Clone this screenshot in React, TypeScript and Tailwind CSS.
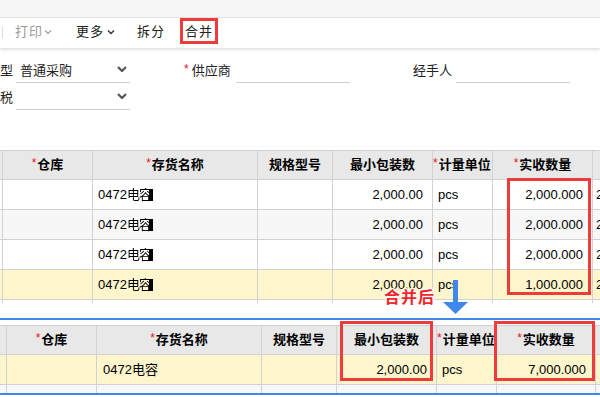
import React from "react";

const Star = () => (
  <span className="text-[#e8101f] text-[12px] font-normal relative -top-[2px] mr-px">*</span>
);

const Chevron = ({ className = "", bold = false }: { className?: string; bold?: boolean }) => (
  <svg width={bold ? 10 : 8} height="6" viewBox={bold ? "0 0 10 6" : "0 0 8 6"} className={className}>
    <polyline
      points={bold ? "1,1 5,5 9,1" : "1,1.5 4,4.5 7,1.5"}
      fill="none"
      stroke="currentColor"
      strokeWidth={bold ? 2.2 : 1.4}
    />
  </svg>
);

const Masked = () => (
  <span className="inline-flex items-center">
    0472
    <span className="blur-[0.7px] tracking-[-1px]">电容</span>
    <span className="inline-block w-[4px] h-[12px] bg-black -ml-[2px]" />
  </span>
);

type Row = { bg: string; name: React.ReactNode; pack: string; qty: string; tail: string };

function Grid({ first, last, rows, tailRow }: { first: string; last: string; rows: Row[]; tailRow: string }) {
  const widths = [first, "w-[90px]", "w-[165px]", "w-[75px]", "w-[100px]", "w-[60px]", last];
  const cell = "shrink-0 border-r border-[#d2d2d2] h-full flex items-center overflow-hidden whitespace-nowrap";
  return (
    <div className="border-t border-[#d2d2d2]">
      {/* header */}
      <div className="flex h-[29px] bg-[#e8e8e8] border-b border-[#d2d2d2] font-bold text-[13px] text-black">
        <div className={`${cell} ${widths[0]}`} />
        <div className={`${cell} ${widths[1]} justify-center`}><Star />仓库</div>
        <div className={`${cell} ${widths[2]} justify-center`}><Star />存货名称</div>
        <div className={`${cell} ${widths[3]} justify-center`}>规格型号</div>
        <div className={`${cell} ${widths[4]} justify-center`}>最小包装数</div>
        <div className={`${cell} ${widths[5]} justify-start`}><Star />计量单位</div>
        <div className={`${cell} ${widths[6]} justify-center`}><Star />实收数量</div>
        <div className="flex-1 h-full" />
      </div>
      {rows.map((r, i) => (
        <div key={i} className={`flex h-[30px] border-b border-[#d2d2d2] text-[13px] text-black ${r.bg}`}>
          <div className={`${cell} ${widths[0]}`} />
          <div className={`${cell} ${widths[1]}`} />
          <div className={`${cell} ${widths[2]} pl-[5px]`}>{r.name}</div>
          <div className={`${cell} ${widths[3]}`} />
          <div className={`${cell} ${widths[4]} justify-end pr-[9px]`}>{r.pack}</div>
          <div className={`${cell} ${widths[5]} pl-[5px]`}>pcs</div>
          <div className={`${cell} ${widths[6]} justify-end pr-[9px]`}>{r.qty}</div>
          <div className="flex-1 h-full flex items-center pl-[3px] overflow-hidden">{r.tail}</div>
        </div>
      ))}
      <div className={`flex ${tailRow}`}>
        {widths.map((w, i) => (
          <div key={i} className={`${cell} ${w}`} />
        ))}
      </div>
    </div>
  );
}

export default function App() {
  return (
    <div className="relative w-[600px] h-[397px] overflow-hidden bg-white text-[#222] font-['Liberation_Sans','Noto_Sans_CJK_SC',sans-serif]">
      {/* top band */}
      <div className="h-[18px] bg-[#f6f6f6] border-b border-[#e2e2e2]" />

      {/* toolbar */}
      <div className="h-[30px] flex items-start bg-white shadow-[0_2px_3px_rgba(0,0,0,0.12)] text-[13px] relative z-10">
        <div className="h-[26px] flex items-center pt-[2px]">
          <div className="ml-[2px] w-px h-[11px] bg-[#dcdcdc]" />
          <span className="ml-[12px] text-[#9a9a9a] tracking-[1px]">打印</span>
          <Chevron className="ml-[1px] text-[#aaa]" />
          <span className="ml-[24px] tracking-[1px]">更多</span>
          <Chevron className="ml-[3px] text-[#333]" />
          <span className="ml-[22px] tracking-[1px]">拆分</span>
          <div className="ml-[15px] -mt-[2px] h-[26px] w-[38px] border-[3px] border-[#ef3b3b] flex items-center justify-center tracking-[1px] pt-[2px]">
            合并
          </div>
        </div>
      </div>

      {/* form */}
      <div className="pt-[11px] h-[102px] text-[13px] text-[#222]">
        <div className="flex h-[24px]">
          <span className="w-[16px] flex items-center">型</span>
          <div className="w-[114px] border-b border-[#cfcfcf] flex items-center justify-between pl-[4px] pr-[3px]">
            <span>普通采购</span>
            <Chevron bold className="text-[#555] -mt-[3px]" />
          </div>
          <span className="ml-[54px] w-[52px] flex items-center">
            <Star />
            <span className="ml-[2px]">供应商</span>
          </span>
          <div className="w-[114px] border-b border-[#cfcfcf]" />
          <span className="ml-[63px] w-[43px] flex items-center">经手人</span>
          <div className="w-[114px] border-b border-[#cfcfcf]" />
        </div>
        <div className="flex h-[24px] mt-[3px]">
          <span className="w-[16px] flex items-center">税</span>
          <div className="w-[114px] border-b border-[#cfcfcf] flex items-center justify-end pr-[3px]">
            <Chevron bold className="text-[#555] -mt-[3px]" />
          </div>
        </div>
      </div>

      {/* table before merge */}
      <Grid
        first="w-[3px]"
        last="w-[100px]"
        tailRow="h-[3px] bg-white"
        rows={[
          { bg: "bg-white", name: <Masked />, pack: "2,000.00", qty: "2,000.000", tail: "2" },
          { bg: "bg-[#f7f7f7]", name: <Masked />, pack: "2,000.00", qty: "2,000.000", tail: "2" },
          { bg: "bg-white", name: <Masked />, pack: "2,000.00", qty: "2,000.000", tail: "2" },
          { bg: "bg-[#fdf5cb]", name: <Masked />, pack: "2,000.00", qty: "1,000.000", tail: "2" },
        ]}
      />

      {/* table after merge */}
      <div className="mt-[15px] border-y-2 border-[#3c8ae8] pt-[5px]">
        <Grid
          first="w-[7px]"
          last="w-[99px]"
          tailRow="h-[8px] bg-[#f7f7f7]"
          rows={[{ bg: "bg-[#fdf5cb]", name: <span className="pl-px">0472电容</span>, pack: "2,000.00", qty: "7,000.000", tail: "" }]}
        />
      </div>

      {/* annotations */}
      <div className="absolute left-[507px] top-[178px] w-[84px] h-[117px] border-[3px] border-[#ef3b3b]" />
      <div className="absolute left-[340px] top-[321px] w-[93px] h-[60px] border-[3px] border-[#ef3b3b]" />
      <div className="absolute left-[494px] top-[321px] w-[101px] h-[60px] border-[3px] border-[#ef3b3b]" />
      <div className="absolute left-[384px] top-[286px] text-[16px] font-bold text-[#f0262b] tracking-[1px] [text-shadow:1px_0_0_#fff,-1px_0_0_#fff,0_1px_0_#fff,0_-1px_0_#fff,1px_1px_0_#fff,-1px_-1px_0_#fff,1px_-1px_0_#fff,-1px_1px_0_#fff]">
        合并后
      </div>
      <svg className="absolute left-[443px] top-[280px]" width="25" height="35" viewBox="0 0 25 35">
        <rect x="10" y="0" width="5" height="23" fill="#3d88e8" />
        <polygon points="0,22 25,22 12.5,34" fill="#3d88e8" />
      </svg>
    </div>
  );
}
